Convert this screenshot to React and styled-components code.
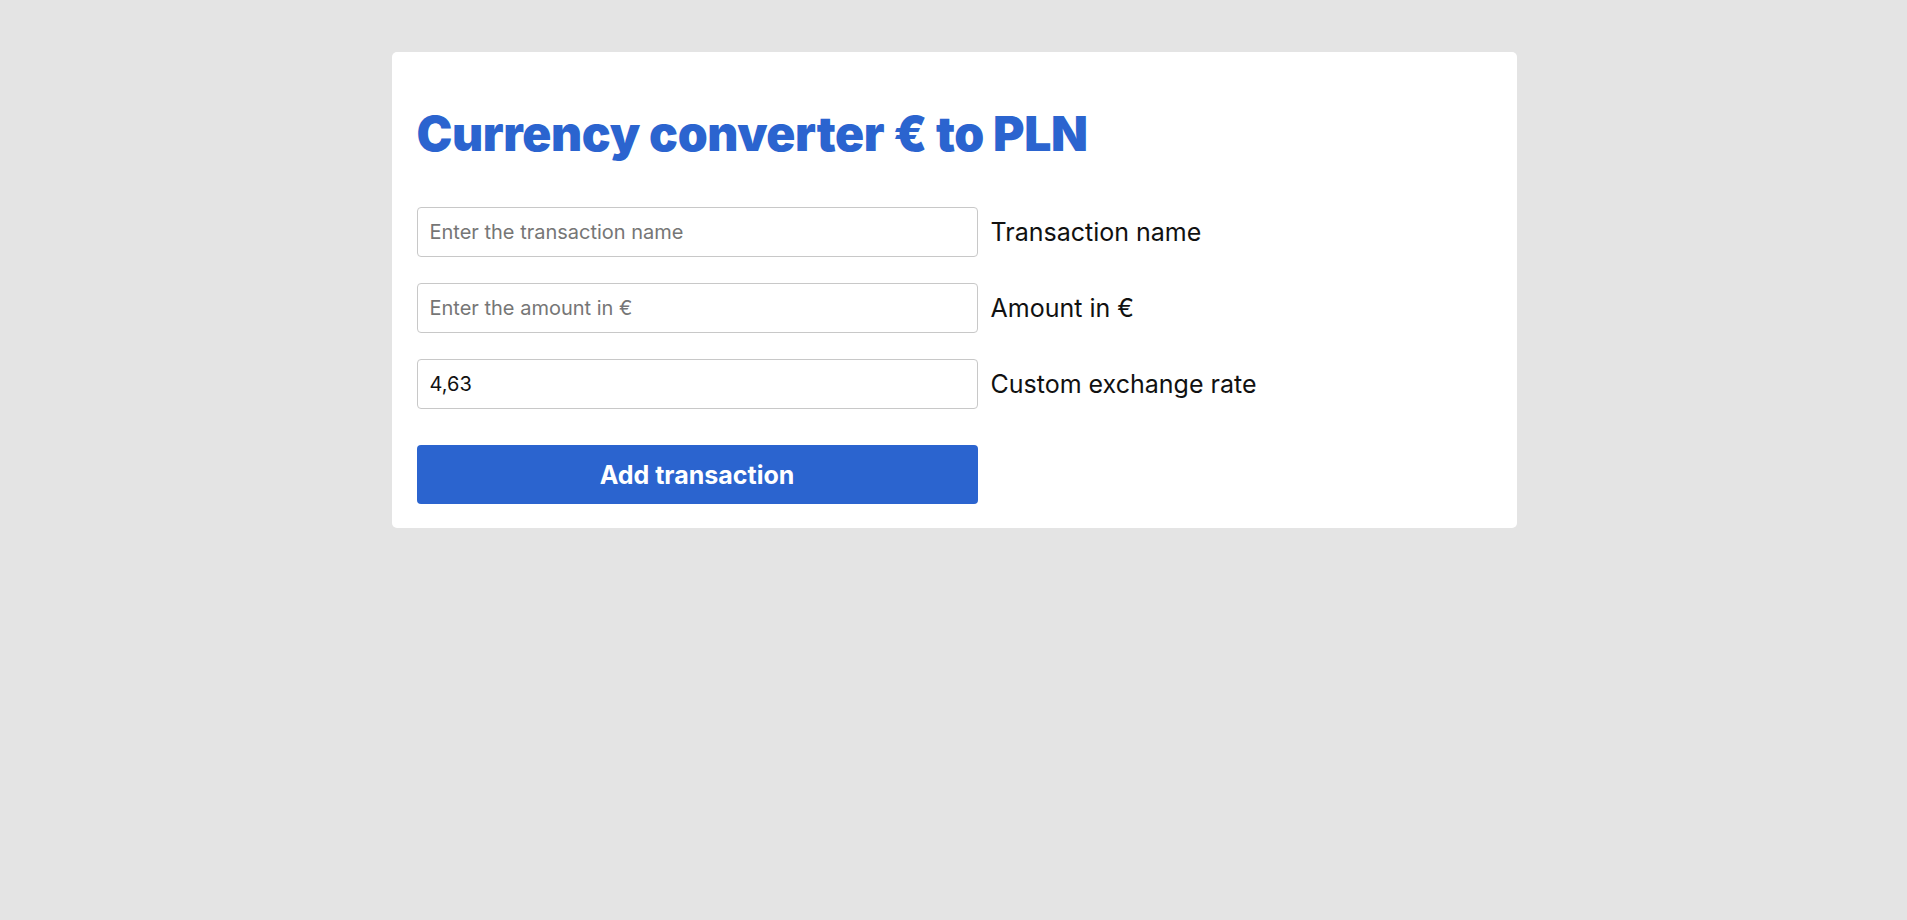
import React, { useState } from 'react';
import styled, { createGlobalStyle } from 'styled-components';

const GlobalStyle = createGlobalStyle`
    html, body {
        margin: 0;
        padding: 0;
        background: #e4e4e4;
        font-family: Inter, "Noto Sans", sans-serif;
    }
    * { box-sizing: border-box; }
`;

const Page = styled.div`
    min-height: 920px;
    padding-top: 52px;
    padding-left: 1px;
    display: flex;
    justify-content: center;
    align-items: flex-start;
`;

const Card = styled.main`
    width: 1125px;
    background: #fff;
    border-radius: 5px;
    padding: 20px 25px 24px;
`;

const Title = styled.h1`
    margin: 33px 0 44px;
    font-size: 48px;
    line-height: 58px;
    font-weight: 900;
    letter-spacing: -0.35px;
    color: #2b64cf;
`;

const Form = styled.form`
    display: flex;
    flex-direction: column;
    gap: 26px;
`;

const Row = styled.div`
    display: flex;
    align-items: center;
    gap: 13px;
`;

const Input = styled.input`
    width: 561px;
    height: 50px;
    padding: 0 12px;
    border: 1px solid #c8c8c8;
    border-radius: 4px;
    font-family: inherit;
    font-size: 20px;
    color: #111;
    outline: none;

    &::placeholder {
        color: #767676;
    }
`;

const Label = styled.label`
    font-size: 25px;
    color: #111;
`;

const Button = styled.button`
    margin-top: 10px;
    width: 561px;
    height: 59px;
    border: none;
    border-radius: 4px;
    background: #2b64cf;
    color: #fff;
    font-family: inherit;
    font-size: 25px;
    font-weight: 700;
    cursor: pointer;
`;

const fields = [
    { id: 'name', label: 'Transaction name', placeholder: 'Enter the transaction name' },
    { id: 'amount', label: 'Amount in €', placeholder: 'Enter the amount in €' },
    { id: 'rate', label: 'Custom exchange rate', placeholder: '' },
];

function App() {
    const [values, setValues] = useState({ name: '', amount: '', rate: '4,63' });

    const handleChange = e => {
        const { id, value } = e.target;
        setValues({ ...values, [id]: value });
    };

    return <>
        <GlobalStyle />
        <Page>
            <Card>
                <Title>Currency converter € to PLN</Title>
                <Form onSubmit={e => e.preventDefault()}>
                    {fields.map(f => <Row key={f.id}>
                        <Input
                            id={f.id}
                            placeholder={f.placeholder}
                            value={values[f.id]}
                            onChange={handleChange}
                        />
                        <Label htmlFor={f.id}>{f.label}</Label>
                    </Row>)}
                    <Button type="submit">Add transaction</Button>
                </Form>
            </Card>
        </Page>
    </>;
}

export default App;
